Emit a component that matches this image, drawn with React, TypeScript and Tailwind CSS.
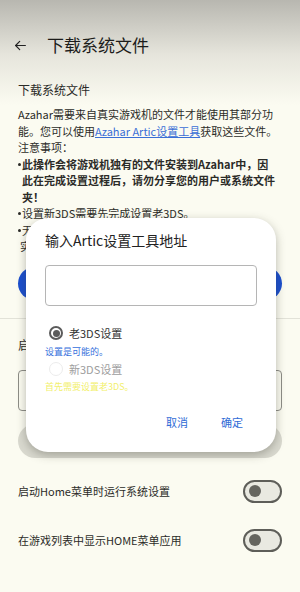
import React from 'react';

const font = { fontFamily: '"Noto Sans CJK SC", "Noto Sans", sans-serif' };

function Toggle() {
  return (
    <div className="w-[39px] h-[23px] rounded-full border-2 border-[#5e5e59] bg-[#e9e9e1] flex items-center pl-[4px]">
      <div className="w-[12px] h-[12px] rounded-full bg-[#65655f]" />
    </div>
  );
}

function Radio({ checked }: { checked: boolean }) {
  return (
    <div
      className={
        checked
          ? 'w-[14px] h-[14px] rounded-full border-2 border-[#5b5b5b] flex items-center justify-center'
          : 'w-[14px] h-[14px] rounded-full border-[1.5px] border-[#ececec]'
      }
    >
      {checked && <div className="w-[7px] h-[7px] rounded-full bg-[#5b5b5b]" />}
    </div>
  );
}

// small bullet drawn as a dot so it sits tight against the text
function Dot() {
  return <span className="inline-block w-[3px] h-[3px] rounded-full bg-current align-[3px] mr-[1px]" />;
}

export default function App() {
  return (
    <div
      style={font}
      className="relative w-[300px] h-[592px] overflow-hidden bg-[linear-gradient(to_bottom,#b8b7b0_0px,#e6e5dc_55px,#fbfbf1_105px)] text-[#1f1f1c]"
    >
      {/* toolbar */}
      <header className="h-[72px] pt-[18px] flex items-center px-[14px] gap-[20px]">
        <svg width="13" height="13" viewBox="0 0 24 24" fill="none" stroke="#222" strokeWidth="2.2" strokeLinecap="round" strokeLinejoin="round">
          <path d="M21 12H3" />
          <path d="M10.5 4.5L3 12l7.5 7.5" />
        </svg>
        <h1 className="text-[17px] leading-[22px] text-[#1c1c1a]">下载系统文件</h1>
      </header>

      <main className="px-[18px]">
        <h2 className="mt-[9px] text-[12px] leading-[18px] text-[#2a2a27]">下载系统文件</h2>

        <div className="mt-[7px] text-[11px] leading-[16.5px] text-[#2b2b28] whitespace-nowrap">
          <p>Azahar需要来自真实游戏机的文件才能使用其部分功</p>
          <p>
            能。您可以使用
            <span className="text-[#3a6fd6] underline">Azahar Artic设置工具</span>
            获取这些文件。
          </p>
          <p>注意事项：</p>
          <p className="font-bold">
            <Dot />此操作会将游戏机独有的文件安装到Azahar中，因
          </p>
          <p className="font-bold pl-[4px]">此在完成设置过程后，请勿分享您的用户或系统文件</p>
          <p className="font-bold pl-[4px]">夹！</p>
          <p>
            <Dot />设置新3DS需要先完成设置老3DS。
          </p>
          <p>
            <Dot />无论设置是否完成，设置工具都会在运行时保持
          </p>
          <p className="pl-[2px]">实机与设备连接到同一个网络。</p>
        </div>

        <button className="mt-[12px] w-full h-[33px] rounded-full bg-[#1b4fcf] text-white text-[11px]">开始设置</button>

        <div className="mt-[18px] -mx-[18px] h-px bg-[#e2e2d8]" />

        <p className="mt-[17px] text-[12px] leading-[18px] text-[#2a2a27]">启动Home菜单</p>

        <div className="mt-[16px] h-[41px] rounded-[4px] border border-[#8d8d87]" />

        <div className="mt-[13px] h-[34px] rounded-full bg-[#d9d9cf]" />

        <div className="mt-[22px] flex items-center justify-between h-[23px]">
          <span className="text-[11px] text-[#2b2b28]">启动Home菜单时运行系统设置</span>
          <Toggle />
        </div>
        <div className="mt-[26px] flex items-center justify-between h-[23px]">
          <span className="text-[11px] text-[#2b2b28]">在游戏列表中显示HOME菜单应用</span>
          <Toggle />
        </div>
      </main>

      {/* dialog */}
      <div className="absolute left-[26px] top-[218px] w-[250px] h-[234px] rounded-[22px] bg-white shadow-[0_3px_10px_rgba(60,60,50,0.35)] px-[19px]">
        <h3 className="pt-[12px] text-[14px] leading-[20px] text-[#222]">输入Artic设置工具地址</h3>
        <div className="mt-[15px] h-[41px] rounded-[4px] border border-[#b5b5b5]" />

        <div className="mt-[18px] flex items-center gap-[6px] pl-[4px] h-[18px]">
          <Radio checked />
          <span className="text-[11px] text-[#333]">老3DS设置</span>
        </div>
        <p className="mt-[3px] text-[9px] leading-[13px] text-[#3570dc]">设置是可能的。</p>
        <div className="mt-[2px] flex items-center gap-[6px] pl-[4px] h-[18px]">
          <Radio checked={false} />
          <span className="text-[11px] text-[#9d9d9d]">新3DS设置</span>
        </div>
        <p className="mt-[2px] text-[9px] leading-[13px] text-[#f2ef6c]">首先需要设置老3DS。</p>

        <div className="mt-[21px] flex justify-end gap-[33px] pr-[14px]">
          <button className="text-[11px] leading-[16px] text-[#2f6bd6]">取消</button>
          <button className="text-[11px] leading-[16px] text-[#2f6bd6]">确定</button>
        </div>
      </div>
    </div>
  );
}
